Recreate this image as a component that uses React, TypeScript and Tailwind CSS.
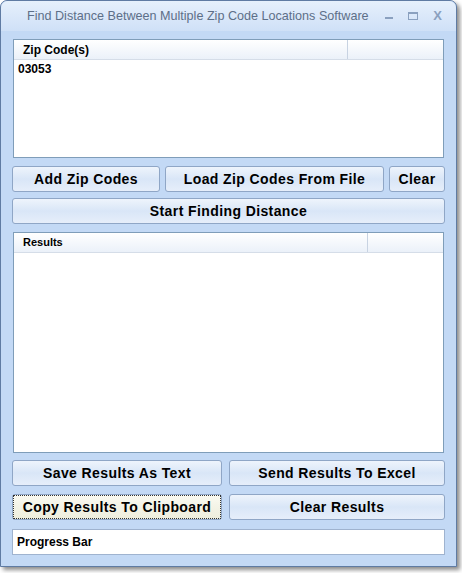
import { ReactNode } from "react";

function Btn({
  children,
  className = "",
  focused = false,
}: {
  children: ReactNode;
  className?: string;
  focused?: boolean;
}) {
  return (
    <button
      className={`h-[26px] rounded-[3px] border border-[#8fa6c6] text-[14px] font-bold tracking-[0.4px] text-black ${
        focused
          ? "bg-gradient-to-b from-[#fbfbf2] via-[#f3f3e6] to-[#eeeedd]"
          : "bg-gradient-to-b from-[#eef4fc] via-[#d9e6f7] to-[#e6eefa]"
      } ${className}`}
    >
      <span
        className={`flex h-full w-full items-center justify-center ${
          focused ? "border border-dotted border-[#333]" : ""
        }`}
      >
        {children}
      </span>
    </button>
  );
}

function ListBox({
  title,
  sep,
  height,
  headSize,
  children,
}: {
  title: string;
  sep: number;
  height: string;
  headSize: string;
  children?: ReactNode;
}) {
  return (
    <div className={`border border-[#7f9db9] bg-white ${height}`}>
      <div className="flex h-[20px] border-b border-[#d5dde8] bg-gradient-to-b from-white to-[#ebf1f9]">
        <div
          className={`flex items-center border-r border-[#c8d3e2] pl-[9px] ${headSize} font-bold`}
          style={{ width: sep }}
        >
          {title}
        </div>
      </div>
      {children}
    </div>
  );
}

export default function App() {
  return (
    <div
      className="h-[573px] w-[462px] bg-white"
      style={{ fontFamily: '"Liberation Sans", Arial, sans-serif' }}
    >
      <div className="flex h-[567px] w-[457px] flex-col rounded-t-[7px] border border-[#5f7ba3] bg-[#c3d9f5] shadow-[3px_3px_4px_rgba(0,0,0,0.45)]">
        {/* title bar */}
        <div className="flex h-[30px] items-center rounded-t-[7px] bg-gradient-to-b from-[#e6f0fc] to-[#cfe0f7] pl-[26px] pr-[14px]">
          <span className="flex-1 text-[12.6px] text-[#5d6f88]">
            Find Distance Between Multiple Zip Code Locations Software
          </span>
          <div className="flex items-center gap-[15px] text-[#7d93b2]">
            <div className="mt-[4px] h-[2px] w-[8px] bg-[#8aa0bf]" />
            <div className="h-[8px] w-[10px] border border-[#8aa0bf] border-t-2" />
            <span className="text-[13px] font-bold text-[#8aa0bf]">X</span>
          </div>
        </div>

        <div className="flex flex-col px-[11px] pt-[8px]">
          <div className="pl-[1px] pr-[1px]">
            <ListBox title="Zip Code(s)" sep={334} height="h-[119px]" headSize="text-[12px]">
              <div className="pl-[4px] text-[12px] font-bold">03053</div>
            </ListBox>
          </div>

          <div className="mt-[8px] flex gap-[5px]">
            <Btn className="w-[148px]">Add Zip Codes</Btn>
            <Btn className="w-[219px]">Load Zip Codes From File</Btn>
            <Btn className="flex-1">Clear</Btn>
          </div>
          <Btn className="mt-[6px] w-full">Start Finding Distance</Btn>

          <div className="mt-[8px] pl-[1px] pr-[1px]">
            <ListBox title="Results" sep={354} height="h-[221px]" headSize="text-[11px]" />
          </div>

          <div className="mt-[7px] flex gap-[7px]">
            <Btn className="w-[210px]">Save Results As Text</Btn>
            <Btn className="flex-1">Send Results To Excel</Btn>
          </div>
          <div className="mt-[8px] flex gap-[7px]">
            <Btn className="w-[210px]" focused>
              Copy Results To Clipboard
            </Btn>
            <Btn className="flex-1">Clear Results</Btn>
          </div>

          <div className="mt-[9px] flex h-[26px] items-center border border-[#9fb3cf] bg-white pl-[4px] text-[12px] font-bold">
            Progress Bar
          </div>
        </div>
      </div>
    </div>
  );
}
